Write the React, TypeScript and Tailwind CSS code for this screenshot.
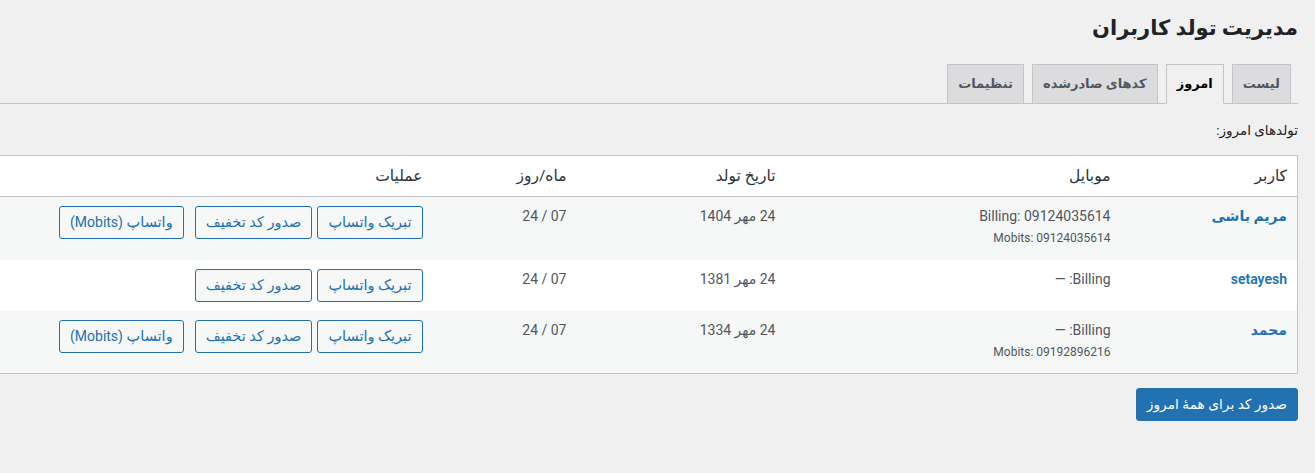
import React from 'react';

type Row = {
    name: string;
    billing: string;
    mobits?: string;
    date: string;
    md: string;
    striped: boolean;
};

const rows: Row[] = [
    { name: 'مریم باشی', billing: 'Billing: 09124035614', mobits: 'Mobits: 09124035614', date: '24 مهر 1404', md: '07 / 24', striped: true },
    { name: 'setayesh', billing: 'Billing: —', date: '24 مهر 1381', md: '07 / 24', striped: false },
    { name: 'محمد', billing: 'Billing: —', mobits: 'Mobits: 09192896216', date: '24 مهر 1334', md: '07 / 24', striped: true },
];

const tabs = [
    { label: 'لیست', active: false },
    { label: 'امروز', active: true },
    { label: 'کدهای صادرشده', active: false },
    { label: 'تنظیمات', active: false },
];

function SmallButton({ children, className = '' }: { children: React.ReactNode; className?: string }) {
    return (
        <button
            type="button"
            className={`h-[33px] rounded-[3px] border border-[#2271b1] bg-[#f6f7f7] px-[10px] text-[14.5px] leading-[31px] text-[#2271b1] whitespace-nowrap ${className}`}
        >
            {children}
        </button>
    );
}

export default function App() {
    return (
        <div
            dir="rtl"
            className="min-h-screen bg-[#f0f0f1] pr-[17px] text-[13px] text-[#3c434a] font-['Roboto','DejaVu_Sans',sans-serif]"
        >
            {/* Title */}
            <h1 className="pt-[14px] text-[21px] leading-[29px] font-bold text-[#1d2327]">مدیریت تولد کاربران</h1>

            {/* Tabs */}
            <nav className="mt-[21px] flex items-end gap-2 border-b border-[#c3c4c7] pr-[7px]">
                {tabs.map((t) => (
                    <a
                        key={t.label}
                        className={`-mb-px h-[40px] border border-[#c3c4c7] px-[10px] text-[13px] font-bold leading-[38px] ${
                            t.active ? 'border-b-[#f0f0f1] bg-[#f0f0f1] text-black' : 'bg-[#dcdcde] text-[#50575e]'
                        }`}
                    >
                        {t.label}
                    </a>
                ))}
            </nav>

            <p className="mt-[16px] text-[13.5px] leading-[20px] text-[#1d2327]">تولدهای امروز:</p>

            {/* Table */}
            <table className="mt-[15px] w-full table-fixed border-collapse border border-l-0 border-[#c3c4c7] bg-white text-right">
                <colgroup>
                    <col className="w-[177px]" />
                    <col className="w-[335px]" />
                    <col className="w-[209px]" />
                    <col className="w-[144px]" />
                    <col />
                </colgroup>
                <thead>
                    <tr className="border-b border-[#c3c4c7]">
                        {['کاربر', 'موبایل', 'تاریخ تولد', 'ماه/روز', 'عملیات'].map((h) => (
                            <th key={h} className="px-[10px] py-[10px] text-[15.5px] font-normal leading-[20px] text-[#2c3338]">
                                {h}
                            </th>
                        ))}
                    </tr>
                </thead>
                <tbody>
                    {rows.map((r) => (
                        <tr key={r.name} className={r.striped ? 'bg-[#f6f7f7]' : 'bg-white'}>
                            <td className={`px-[10px] pt-[9px] align-top ${r.mobits ? 'h-[63px]' : ''}`}>
                                <a className="text-[14px] font-semibold leading-[20px] text-[#2271b1]">{r.name}</a>
                            </td>
                            <td className="px-[10px] pt-[9px] align-top text-[#50575e]">
                                <div className="text-[14px] leading-[20px]">{r.billing}</div>
                                {r.mobits && <div className="mt-[2px] text-[12px] leading-[20px]">{r.mobits}</div>}
                            </td>
                            <td className="px-[10px] pt-[9px] align-top text-[14px] leading-[20px] text-[#50575e]">{r.date}</td>
                            <td className="px-[10px] pt-[9px] align-top text-[14px] leading-[20px] text-[#50575e]">{r.md}</td>
                            <td className="px-[10px] py-[9px] align-top">
                                <div className="flex">
                                    <SmallButton className="ml-[5px]">تبریک واتساپ</SmallButton>
                                    <SmallButton className="ml-[11px]">صدور کد تخفیف</SmallButton>
                                    {r.mobits && (
                                        <SmallButton>
                                            واتساپ <span className="text-[14px]">(Mobits)</span>
                                        </SmallButton>
                                    )}
                                </div>
                            </td>
                        </tr>
                    ))}
                </tbody>
            </table>

            <button
                type="button"
                className="mt-[14px] h-[33px] rounded-[3px] border border-[#2271b1] bg-[#2271b1] px-[10px] text-[13.75px] font-normal leading-[31px] text-white"
            >
                صدور کد برای همهٔ امروز
            </button>
        </div>
    );
}
